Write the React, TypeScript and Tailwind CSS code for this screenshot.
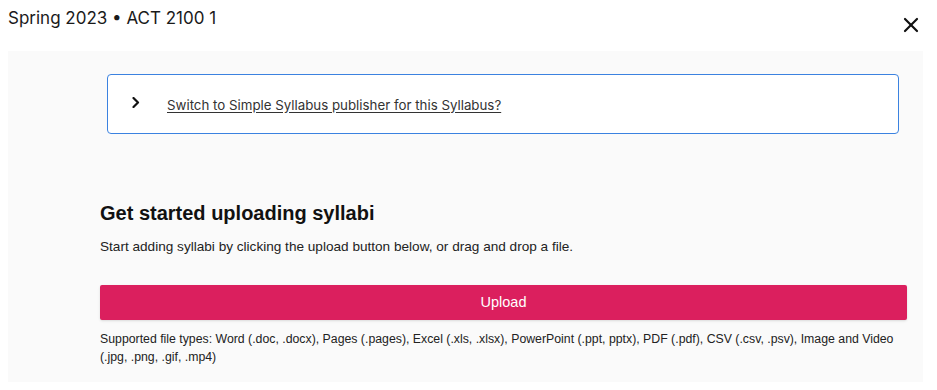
import { X } from 'lucide-react'

export default function App() {
  return (
    <div className="w-[937px] h-[390px] bg-white overflow-hidden">
      {/* Header */}
      <div className="h-[51px] flex items-start justify-between pl-[8px] pr-[14px]">
        <h1 className="mt-[7px] text-[17px] leading-[22px] text-[#1a1a1a] font-['Inter',sans-serif]">
          Spring 2023 • ACT 2100 1
        </h1>
        <button className="mt-[13px] text-[#111]">
          <X className="h-[24px] w-[24px]" strokeWidth={2.2} />
        </button>
      </div>

      {/* Panel */}
      <div className="mx-[8px] w-[915px] bg-[#fafafa] pt-[23px] pb-[16px]">
        <div className="ml-[99px] mr-[24px] h-[60px] bg-white border border-[#3b82e0] rounded-[4px] flex items-center pl-[24px]">
          <svg width="8" height="11" viewBox="0 0 8 11" className="-mt-[4px] text-[#111]">
            <polyline
              points="1.5,1 6,5.5 1.5,10"
              fill="none"
              stroke="currentColor"
              strokeWidth="2.2"
              strokeLinecap="round"
              strokeLinejoin="round"
            />
          </svg>
          <a
            href="#"
            className="ml-[27px] mt-[3px] text-[13.3px] text-[#333] underline underline-offset-2 font-['Inter',sans-serif]"
          >
            Switch to Simple Syllabus publisher for this Syllabus?
          </a>
        </div>

        <div className="pl-[92px] pr-[16px] font-['Liberation_Sans',Arial,sans-serif]">
          <h2 className="mt-[67px] text-[20px] leading-[24px] font-bold text-[#111]">
            Get started uploading syllabi
          </h2>
          <p className="mt-[13px] text-[13.6px] leading-[18px] text-[#222]">
            Start adding syllabi by clicking the upload button below, or drag and drop a file.
          </p>
          <button className="mt-[29px] w-full h-[35px] bg-[#db1f5e] rounded-[2px] text-white text-[14.5px] shadow-sm">
            Upload
          </button>
          <p className="mt-[10px] text-[12.3px] leading-[18px] text-[#222]">
            Supported file types: Word (.doc, .docx), Pages (.pages), Excel (.xls, .xlsx), PowerPoint (.ppt, pptx), PDF (.pdf), CSV (.csv, .psv), Image and Video (.jpg, .png, .gif, .mp4)
          </p>
        </div>
      </div>
    </div>
  )
}
